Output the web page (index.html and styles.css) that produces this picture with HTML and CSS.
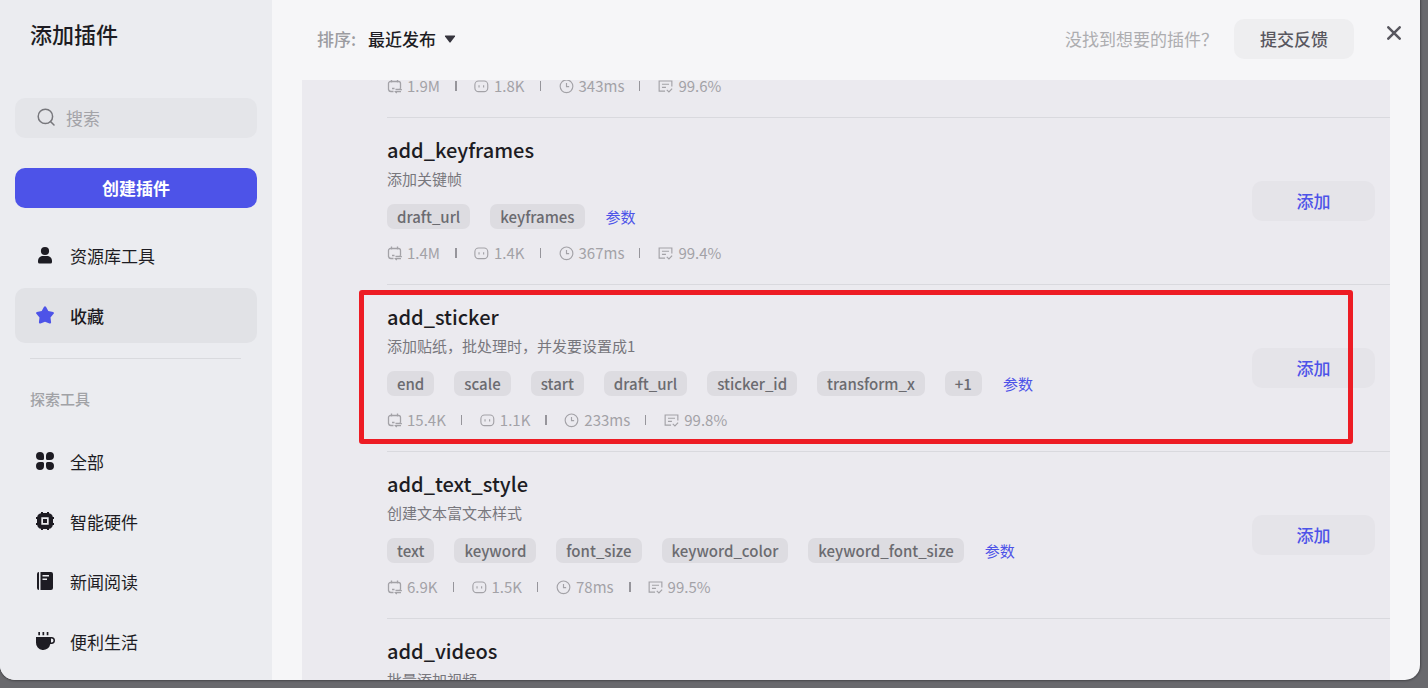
FILE: index.html
```html
<!DOCTYPE html>
<html lang="zh-CN">
<head>
<meta charset="utf-8">
<meta name="viewport" content="width=device-width, initial-scale=1">
<title>添加插件</title>
<link rel="stylesheet" href="styles.css">
</head>
<body>
<svg class="sprite" aria-hidden="true">
  <symbol id="plug" viewBox="0 0 15 15"><path d="M6.500 12.500H4A2.500 2.500 0 0 1 1.500 10.500V4.500A2 2 0 0 1 3.500 2.500H11.500A2 2 0 0 1 13.500 4.500V9M4.500 3.500V.5M10.500 3.500V.5M5 9.500h2.500M8.500 10.500h5.500l-1.200-1.200M14 12.700H8.500l1.200 1.400"/></symbol>
  <symbol id="bot" viewBox="-.5 -.5 17 17"><rect x=".5" y="1.800" width="14.600" height="12" rx="4.200"/><path d="M5.200 6.600v2.400M10.400 6.600v2.400"/></symbol>
  <symbol id="clock" viewBox="-.5 -.3 17 17"><circle cx="8" cy="8" r="7.200"/><path d="M8 4.200V8.300h3"/></symbol>
  <symbol id="check" viewBox="-.5 -.3 17 17"><path d="M7.500 13.400H.8V2H15.200V8.200M4 5.700h8M4 9.200h4.500M9.400 12l2.500 2.400 3.600-3.700"/></symbol>
</svg>
<div class="dialog" role="dialog" aria-labelledby="title">
  <aside class="sidebar">
    <h1 class="title" id="title">添加插件</h1>
    <label class="search">
      <svg class="search-icon" viewBox="0 0 18 18" aria-hidden="true"><circle cx="8.400" cy="8.400" r="7.200"/><path d="M13.500 13.500l3.500 3.500"/></svg>
      <input class="search-input" type="search" placeholder="搜索" aria-label="搜索">
    </label>
    <button class="create" type="button">创建插件</button>
    <nav class="menu">
      <a class="item" href="#library"><svg class="item-icon" viewBox="0 0 20 20" aria-hidden="true"><circle cx="10" cy="5" r="4.100"/><path d="M3 15C3 11.500 5.500 9.900 8 9.900h4c2.500 0 5 1.600 5 5.100v1q0 1.500-1.500 1.500h-11Q3 17.500 3 16z"/></svg>资源库工具</a>
      <a class="item item-active" href="#favorites" aria-current="page"><svg class="item-icon" viewBox="0 .5 20 20" aria-hidden="true"><path d="M8.900 1.500Q10 .1 11.100 1.500L13.300 5.500 18.100 6.500Q19.500 7 18.600 8.300L15.500 12 16.100 16.800Q16.100 18.500 14.500 18L10 16.200 5.500 18Q3.900 18.500 3.900 16.800L4.500 12 1.400 8.300Q.5 7 1.900 6.500L6.700 5.500z"/></svg>收藏</a>
    </nav>
    <hr class="divider">
    <h2 class="group">探索工具</h2>
    <nav class="menu">
      <a class="item" href="#all"><svg class="item-icon" viewBox="0 1 20 20" aria-hidden="true"><path d="M5 1a4 4 0 0 1 4 4v2.500Q9 9 7.500 9H5a4 4 0 0 1 0-8zM15 1a4 4 0 0 1 0 8h-2.500Q11 9 11 7.500V5a4 4 0 0 1 4-4zM5 11h2.500Q9 11 9 12.500V15a4 4 0 1 1-4-4zM12.500 11H15a4 4 0 1 1-4 4v-2.500Q11 11 12.500 11z"/></svg>全部</a>
      <a class="item" href="#hardware"><svg class="item-icon" viewBox="0 1 20 20" aria-hidden="true"><path fill-rule="evenodd" d="M6 2.200V1h2v1h4V1h2v1.200A4.500 4.500 0 0 1 17.800 6H19v2h-1v4h1v2h-1.200A4.500 4.500 0 0 1 14 17.800V19h-2v-1H8v1H6v-1.200A4.500 4.500 0 0 1 2.200 14H1v-2h1V8H1V6h1.200A4.500 4.500 0 0 1 6 2.200zM6.300 6.300v7.400h7.400V6.300zM8 8h4v4H8z"/></svg>智能硬件</a>
      <a class="item" href="#news"><svg class="item-icon" viewBox="0 1 20 20" aria-hidden="true"><path fill-rule="evenodd" d="M4 1v18Q2 19 2 17V3Q2 1 4 1zM5.500 1H16Q18 1 18 3v14Q18 19 16 19H5.500zM7.500 4v1.600H14V4zM7.500 7.500v1.600H12V7.500z"/></svg>新闻阅读</a>
      <a class="item" href="#life"><svg class="item-icon" viewBox="0 1 20 20" aria-hidden="true"><path fill-rule="evenodd" d="M3.300 1h1.700v3.300H3.300zM7.500 1h1.700v3.300H7.500zM11.700 1h1.700v3.300h-1.700zM1 6h15.500a3 3 0 0 1 0 7H15.300A7.200 7.200 0 0 1 1 11.500zM16 7.500v4h.5a2 2 0 0 0 0-4z"/></svg>便利生活</a>
    </nav>
  </aside>
  <main class="main">
    <header class="bar">
      <label class="sort-label" for="sort">排序:</label>
      <select class="sort" id="sort"><option>最近发布</option></select>
      <svg class="caret" viewBox="0 0 12 8" aria-hidden="true"><path d="M1.500.5h9Q11.500.5 11 1.500L6.600 7.300Q6 8 5.400 7.300L1 1.500Q.5.5 1.500.5z"/></svg>
      <span class="hint">没找到想要的插件？</span>
      <button class="feedback" type="button">提交反馈</button>
      <button class="close" type="button" aria-label="关闭"><svg class="close-icon" viewBox="0 0 14 14" aria-hidden="true"><path d="M1.300 1.300l11.400 11.400M12.700 1.300L1.300 12.700"/></svg></button>
    </header>
    <ul class="list">
      <li class="row row-cut">
        <div class="body">
          <div class="info">
            <div class="stats">
              <span class="stat"><svg class="stat-icon"><use href="#plug"/></svg>1.9M</span><i class="bar-sep bar-wide"></i>
              <span class="stat"><svg class="stat-icon"><use href="#bot"/></svg>1.8K</span><i class="bar-sep"></i>
              <span class="stat"><svg class="stat-icon"><use href="#clock"/></svg>343ms</span><i class="bar-sep"></i>
              <span class="stat"><svg class="stat-icon"><use href="#check"/></svg>99.6%</span>
            </div>
          </div>
        </div>
      </li>
      <li class="row">
        <div class="body">
          <div class="info">
            <h3 class="name">add_keyframes</h3>
            <p class="desc">添加关键帧</p>
            <div class="tags"><span class="tag">draft_url</span><span class="tag">keyframes</span><button class="params" type="button">参数</button></div>
            <div class="stats">
              <span class="stat"><svg class="stat-icon"><use href="#plug"/></svg>1.4M</span><i class="bar-sep bar-wide"></i>
              <span class="stat"><svg class="stat-icon"><use href="#bot"/></svg>1.4K</span><i class="bar-sep"></i>
              <span class="stat"><svg class="stat-icon"><use href="#clock"/></svg>367ms</span><i class="bar-sep"></i>
              <span class="stat"><svg class="stat-icon"><use href="#check"/></svg>99.4%</span>
            </div>
          </div>
          <button class="add" type="button">添加</button>
        </div>
      </li>
      <li class="row row-marked">
        <div class="body">
          <div class="info">
            <h3 class="name">add_sticker</h3>
            <p class="desc">添加贴纸，批处理时，并发要设置成1</p>
            <div class="tags"><span class="tag">end</span><span class="tag">scale</span><span class="tag">start</span><span class="tag">draft_url</span><span class="tag">sticker_id</span><span class="tag">transform_x</span><span class="tag">+1</span><button class="params" type="button">参数</button></div>
            <div class="stats">
              <span class="stat"><svg class="stat-icon"><use href="#plug"/></svg>15.4K</span><i class="bar-sep"></i>
              <span class="stat"><svg class="stat-icon"><use href="#bot"/></svg>1.1K</span><i class="bar-sep bar-wide"></i>
              <span class="stat"><svg class="stat-icon"><use href="#clock"/></svg>233ms</span><i class="bar-sep"></i>
              <span class="stat"><svg class="stat-icon"><use href="#check"/></svg>99.8%</span>
            </div>
          </div>
          <button class="add" type="button">添加</button>
        </div>
      </li>
      <li class="row">
        <div class="body">
          <div class="info">
            <h3 class="name">add_text_style</h3>
            <p class="desc">创建文本富文本样式</p>
            <div class="tags"><span class="tag">text</span><span class="tag">keyword</span><span class="tag">font_size</span><span class="tag">keyword_color</span><span class="tag">keyword_font_size</span><button class="params" type="button">参数</button></div>
            <div class="stats">
              <span class="stat"><svg class="stat-icon"><use href="#plug"/></svg>6.9K</span><i class="bar-sep"></i>
              <span class="stat"><svg class="stat-icon"><use href="#bot"/></svg>1.5K</span><i class="bar-sep"></i>
              <span class="stat"><svg class="stat-icon"><use href="#clock"/></svg>78ms</span><i class="bar-sep bar-wide"></i>
              <span class="stat"><svg class="stat-icon"><use href="#check"/></svg>99.5%</span>
            </div>
          </div>
          <button class="add" type="button">添加</button>
        </div>
      </li>
      <li class="row">
        <div class="body">
          <div class="info">
            <h3 class="name">add_videos</h3>
            <p class="desc">批量添加视频</p>
          </div>
        </div>
      </li>
    </ul>
  </main>
</div>
</body>
</html>
```
FILE: styles.css
```css
* {
  box-sizing: border-box;
}

body {
  margin: 0;
  height: 100vh;
  padding: 0 8px 8px 0;
  overflow: hidden;
  background: #69696d;
  color: #1d1c23;
  font-family: "Noto Sans CJK SC", sans-serif;
  font-size: 17px;
}

h1,
h2,
h3,
p,
ul {
  margin: 0;
  padding: 0;
}

button,
input,
select {
  border: 0;
  padding: 0;
  background: none;
  color: inherit;
  font: inherit;
}

.sprite {
  display: none;
}

.dialog {
  display: flex;
  height: 100%;
  overflow: hidden;
  border-radius: 0 0 15px 15px;
  background: #f6f6f8;
  box-shadow: 0 0 2px 1px #47474b;
}

.sidebar {
  flex: 0 0 272px;
  padding: 17px 15px 0;
  overflow: hidden;
  background: #ebecf0;
}

.title {
  padding-left: 15px;
  font-size: 22px;
  font-weight: 500;
  line-height: 32px;
}

.search {
  display: flex;
  align-items: center;
  gap: 11px;
  height: 40px;
  margin-top: 49px;
  padding: 0 22px 2px;
  border-radius: 10px;
  background: #e4e5e9;
}

.search-icon {
  flex: none;
  width: 18px;
  height: 18px;
  fill: none;
  stroke: #77777c;
  stroke-width: 1.5;
  stroke-linecap: round;
}

.search-input {
  flex: 1;
  min-width: 0;
  outline: 0;
}

.search-input::placeholder {
  color: #a3a3a8;
}

.create {
  width: 100%;
  height: 40px;
  margin: 30px 0 20px;
  padding-bottom: 2px;
  border-radius: 10px;
  background: #4d53e8;
  color: #fff;
  font-weight: 700;
}

.menu {
  display: flex;
  flex-direction: column;
  gap: 5px;
}

.item {
  display: flex;
  align-items: center;
  gap: 15px;
  height: 55px;
  padding: 0 20px;
  border-radius: 10px;
  color: #1d1c23;
  text-decoration: none;
}

.item-icon {
  width: 20px;
  height: 20px;
  fill: currentColor;
}

.item-active {
  background: #e1e2e6;
  font-weight: 500;
}

.item-active .item-icon {
  fill: #4d53e8;
}

.divider {
  height: 1px;
  margin: 15px 16px 28px 15px;
  border: 0;
  background: #d9dade;
}

.group {
  margin-bottom: 23px;
  padding-left: 15px;
  color: #a1a2a6;
  font-size: 15px;
  font-weight: 500;
  line-height: 24px;
}

.main {
  display: flex;
  flex: 1;
  flex-direction: column;
  min-width: 0;
}

.bar {
  display: flex;
  flex: 0 0 80px;
  align-items: center;
  padding: 0 11px 2px 45px;
}

.sort-label,
.sort,
.hint {
  padding-bottom: 2px;
}

.sort-label {
  margin-right: 12px;
  color: #9c9ca1;
  font-weight: 500;
}

.sort {
  appearance: none;
  font-weight: 500;
}

.caret {
  width: 12px;
  height: 8px;
  margin-left: 8px;
  fill: #36353e;
}

.hint {
  margin-left: auto;
  color: #adadb0;
}

.feedback {
  width: 120px;
  height: 40px;
  margin: 0 25px 0 16px;
  padding-bottom: 2px;
  border-radius: 10px;
  background: #eeeef0;
  color: #58575f;
  font-weight: 500;
}

.close {
  display: grid;
  place-items: center;
  align-self: flex-start;
  width: 30px;
  height: 30px;
  margin-top: 18px;
}

.close-icon {
  width: 14px;
  height: 14px;
  fill: none;
  stroke: #58575f;
  stroke-width: 2.5;
  stroke-linecap: round;
}

.list {
  flex: 1;
  min-height: 0;
  margin: 0 30px;
  overflow: hidden;
  background: #ebeaef;
  list-style: none;
}

.row {
  position: relative;
  padding-left: 85px;
}

.row-cut {
  margin-top: -36px;
}

.body {
  display: flex;
  align-items: center;
  padding-right: 15px;
  border-bottom: 1px solid #d9d9de;
}

.info {
  flex: 1;
  min-width: 0;
  padding: 18px 0 20px;
}

.row-marked::after {
  content: "";
  position: absolute;
  inset: 5px 37px 8px 57px;
  border: 5px solid #ed1c24;
  border-radius: 3px;
  pointer-events: none;
}

.name {
  font-size: 20px;
  font-weight: 500;
  line-height: 28px;
}

.desc {
  margin-top: 4px;
  color: #78777d;
  font-size: 15px;
  line-height: 22px;
}

.tags {
  display: flex;
  gap: 20px;
  margin-top: 14px;
  font-size: 15px;
  line-height: 25px;
}

.tag {
  padding: 0 10px;
  border-radius: 7px;
  background: #dddce1;
  color: #6b6b70;
  font-weight: 500;
}

.params {
  padding-left: 1px;
  color: #4d53e8;
}

.stats {
  display: flex;
  align-items: center;
  margin-top: 13px;
  color: #a3a2a7;
  font-size: 15px;
  line-height: 22px;
}

.stat {
  display: flex;
  align-items: center;
  gap: 5px;
}

.stat-icon {
  width: 15px;
  height: 15px;
  fill: none;
  stroke: currentColor;
  stroke-width: 1.3;
}

.bar-sep {
  width: 1px;
  height: 10px;
  margin: 0 18px 0 15px;
  background: #96959b;
}

.bar-wide {
  width: 2px;
  margin-right: 17px;
}

.add {
  width: 123px;
  height: 40px;
  padding-bottom: 2px;
  border-radius: 10px;
  background: #e5e4e9;
  color: #4d53e8;
  font-weight: 500;
}
```
